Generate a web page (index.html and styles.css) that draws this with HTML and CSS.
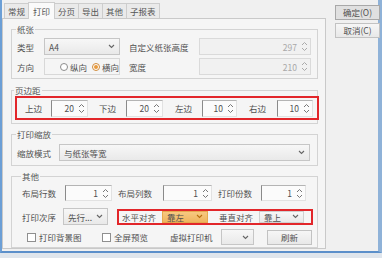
FILE: index.html
```html
<!DOCTYPE html>
<html lang="zh">
<head>
    <meta charset="UTF-8">
    <title>打印设置</title>
    <link rel="stylesheet" href="styles.css">
</head>
<body>
<div class="win">
    <div class="main">
        <div class="tabs">
            <span class="tab">常规</span>
            <span class="tab on">打印</span>
            <span class="tab">分页</span>
            <span class="tab">导出</span>
            <span class="tab">其他</span>
            <span class="tab">子报表</span>
        </div>
        <div class="page">
            <fieldset class="grp g-paper">
                <legend>纸张</legend>
                <div class="row">
                    <span class="lbl w27">类型</span>
                    <div class="sel w76"><span>A4</span><svg width="7" height="5" viewBox="0 0 7 5"><path d="M1 1l2.5 2.5L6 1" fill="none" stroke="#666" stroke-width="1.1"/></svg></div>
                    <span class="lbl ml9 w70">自定义纸张高度</span>
                    <div class="spin dis w112"><span>297</span><svg width="7" height="11" viewBox="0 0 7 11"><path d="M1 4l2.5-2.5L6 4M1 7l2.5 2.5L6 7" fill="none" stroke="#aaa" stroke-width="1"/></svg></div>
                </div>
                <div class="row">
                    <span class="lbl w27">方向</span>
                    <div class="radios w76">
                        <span class="radio"></span><span class="lbl">纵向</span>
                        <span class="radio checked"></span><span class="lbl">横向</span>
                    </div>
                    <span class="lbl ml9 w70">宽度</span>
                    <div class="spin dis w112"><span>210</span><svg width="7" height="11" viewBox="0 0 7 11"><path d="M1 4l2.5-2.5L6 4M1 7l2.5 2.5L6 7" fill="none" stroke="#aaa" stroke-width="1"/></svg></div>
                </div>
            </fieldset>

            <fieldset class="grp g-margin">
                <legend>页边距</legend>
                <div class="mark row margins">
                    <span class="lbl w26">上边</span>
                    <div class="spin w37 mr11"><span>20</span><svg width="7" height="11" viewBox="0 0 7 11"><path d="M1 4l2.5-2.5L6 4M1 7l2.5 2.5L6 7" fill="none" stroke="#777" stroke-width="1"/></svg></div>
                    <span class="lbl w27">下边</span>
                    <div class="spin w37 mr12"><span>20</span><svg width="7" height="11" viewBox="0 0 7 11"><path d="M1 4l2.5-2.5L6 4M1 7l2.5 2.5L6 7" fill="none" stroke="#777" stroke-width="1"/></svg></div>
                    <span class="lbl w27">左边</span>
                    <div class="spin w35 mr12"><span>10</span><svg width="7" height="11" viewBox="0 0 7 11"><path d="M1 4l2.5-2.5L6 4M1 7l2.5 2.5L6 7" fill="none" stroke="#777" stroke-width="1"/></svg></div>
                    <span class="lbl w28">右边</span>
                    <div class="spin w36"><span>10</span><svg width="7" height="11" viewBox="0 0 7 11"><path d="M1 4l2.5-2.5L6 4M1 7l2.5 2.5L6 7" fill="none" stroke="#777" stroke-width="1"/></svg></div>
                </div>
            </fieldset>

            <fieldset class="grp g-scale">
                <legend>打印缩放</legend>
                <div class="row">
                    <span class="lbl w42">缩放模式</span>
                    <div class="sel w251"><span>与纸张等宽</span><svg width="7" height="5" viewBox="0 0 7 5"><path d="M1 1l2.5 2.5L6 1" fill="none" stroke="#666" stroke-width="1.1"/></svg></div>
                </div>
            </fieldset>

            <fieldset class="grp g-other">
                <legend>其他</legend>
                <div class="row r1">
                    <span class="lbl w43">布局行数</span>
                    <div class="spin w47"><span>1</span><svg width="7" height="11" viewBox="0 0 7 11"><path d="M1 4l2.5-2.5L6 4M1 7l2.5 2.5L6 7" fill="none" stroke="#777" stroke-width="1"/></svg></div>
                    <span class="lbl ml6 w45">布局列数</span>
                    <div class="spin w49"><span>1</span><svg width="7" height="11" viewBox="0 0 7 11"><path d="M1 4l2.5-2.5L6 4M1 7l2.5 2.5L6 7" fill="none" stroke="#777" stroke-width="1"/></svg></div>
                    <span class="lbl ml6 w43">打印份数</span>
                    <div class="spin w45"><span>1</span><svg width="7" height="11" viewBox="0 0 7 11"><path d="M1 4l2.5-2.5L6 4M1 7l2.5 2.5L6 7" fill="none" stroke="#777" stroke-width="1"/></svg></div>
                </div>
                <div class="row r2">
                    <span class="lbl w41">打印次序</span>
                    <div class="sel w45"><span>先行...</span><svg width="7" height="5" viewBox="0 0 7 5"><path d="M1 1l2.5 2.5L6 1" fill="none" stroke="#666" stroke-width="1.1"/></svg></div>
                    <div class="mark row align">
                        <span class="lbl w40">水平对齐</span>
                        <div class="sel hot w46"><span>靠左</span><svg width="7" height="5" viewBox="0 0 7 5"><path d="M1 1l2.5 2.5L6 1" fill="none" stroke="#b86e10" stroke-width="1.1"/></svg></div>
                        <span class="lbl ml11 w40">垂直对齐</span>
                        <div class="sel w45"><span>靠上</span><svg width="7" height="5" viewBox="0 0 7 5"><path d="M1 1l2.5 2.5L6 1" fill="none" stroke="#666" stroke-width="1.1"/></svg></div>
                    </div>
                </div>
                <div class="row r3">
                    <span class="check"></span><span class="lbl w58">打印背景图</span>
                    <span class="check"></span><span class="lbl w56">全屏预览</span>
                    <span class="lbl w51">虚拟打印机</span>
                    <div class="sel w33"><span></span><svg width="7" height="5" viewBox="0 0 7 5"><path d="M1 1l2.5 2.5L6 1" fill="none" stroke="#666" stroke-width="1.1"/></svg></div>
                    <button class="btn refresh">刷新</button>
                </div>
            </fieldset>
        </div>
    </div>
    <div class="side">
        <button class="btn ok">确定(O)</button>
        <button class="btn">取消(C)</button>
    </div>
</div>
</body>
</html>
```

FILE: styles.css
```css
html, body {
    margin: 0;
    padding: 0;
}

body {
    width: 382px;
    height: 258px;
    overflow: hidden;
    background: #dfe5ec;
    font-family: "Noto Sans CJK SC", "Noto Sans", sans-serif;
    font-size: 8.5px;
    color: #505050;
}

.win {
    display: flex;
    height: 253px;
    background: #f0f0f0;
    border-left: 2px solid #6c9fd6;
    border-right: 4px solid #8fb2d8;
    border-bottom: 2px solid #5b8fca;
    box-sizing: border-box;
    width: 382px;
}

.main {
    width: 324px;
    display: flex;
    flex-direction: column;
}

/* tab strip */
.tabs {
    display: flex;
    align-items: flex-end;
    height: 18px;
    padding-left: 2px;
}

.tab {
    height: 14px;
    line-height: 14px;
    padding: 0 3px;
    border: 1px solid #cdcdcd;
    border-bottom: none;
    margin-right: -1px;
    background: #eaeaea;
    color: #555;
}

.tab.on {
    height: 16px;
    line-height: 16px;
    background: #fafafa;
    position: relative;
    z-index: 1;
    margin-bottom: -1px;
    padding: 0 4px;
}

.page {
    flex: 1;
    border: 1px solid #c9c9c9;
    background: #f5f5f5;
    padding: 4px 7px 0 8px;
    margin-bottom: 2px;
}

/* group boxes */
.grp {
    margin: 0;
    border: 1px solid #d3d3d3;
    padding: 0;
    min-width: 0;
}

.grp legend {
    padding: 0 1px;
    margin-left: -1px;
    line-height: 12px;
    color: #555;
}

.g-paper {
    padding: 3px 0 3px 5px;
}

.g-paper .row + .row {
    margin-top: 3px;
}

.g-margin {
    margin-top: 5px;
    padding: 0 0 3px 3px;
}

.g-scale {
    margin-top: 4px;
    padding: 4px 0 4px 5px;
}

.g-other {
    margin-top: 4px;
    padding: 3px 0 2px 10px;
}

.row {
    display: flex;
    align-items: center;
}

.r2 {
    margin-top: 7px;
}

.r3 {
    margin-top: 4px;
}

.lbl {
    flex: none;
    white-space: nowrap;
    line-height: 12px;
}

/* red highlight boxes */
.mark {
    border: 2px solid #e2262a;
}

.margins {
    width: 304px;
    height: 24px;
    box-sizing: border-box;
    padding-left: 8px;
}

.align {
    width: 196px;
    height: 16px;
    box-sizing: border-box;
    margin-left: 9px;
    padding-left: 3px;
}

/* inputs */
.sel, .spin {
    flex: none;
    display: flex;
    align-items: center;
    justify-content: space-between;
    box-sizing: border-box;
    height: 17px;
    padding: 0 4px;
}

.sel {
    border: 1px solid #c6c6c6;
    background: linear-gradient(#f7f7f7, #e9e9e9);
}

.align .sel {
    height: 12px;
    border-color: #d0d0d0;
}

.sel.hot {
    background: linear-gradient(#f7c981, #efb55e);
    border-color: #e7a94e;
}

.spin {
    background: #fbfbfb;
    border: 1px solid #e2e2e2;
    border-left-color: #8a8a8a;
    border-top-color: #b4b4b4;
    padding-right: 2px;
}

.spin span {
    flex: 1;
    text-align: right;
    padding-right: 4px;
}

.spin.dis {
    background: #f1f1f1;
    border-color: #dadada;
    color: #a8a8a8;
}

.r1 .spin, .r3 .sel {
    height: 16px;
}

.radios {
    flex: none;
    display: flex;
    align-items: center;
    height: 17px;
    box-sizing: border-box;
    border: 1px solid #d8d8d8;
    padding-left: 15px;
}

.radio {
    flex: none;
    width: 6px;
    height: 6px;
    border: 1px solid #8d8d8d;
    border-radius: 50%;
    background: #fff;
    margin-right: 2px;
    position: relative;
}

.radio.checked {
    margin-left: 5px;
    border-color: #d08a3a;
}

.radio.checked::after {
    content: "";
    position: absolute;
    left: 1px;
    top: 1px;
    width: 4px;
    height: 4px;
    border-radius: 50%;
    background: #e89a3c;
}

.check {
    flex: none;
    width: 7px;
    height: 7px;
    border: 1px solid #8f8f8f;
    background: #fff;
    margin: 0 3px 0 5px;
}

.btn {
    font: inherit;
    color: #505050;
    background: linear-gradient(#f6f6f6, #e8e8e8);
    border: 1px solid #c2c2c2;
    height: 15px;
    padding: 0;
    line-height: 13px;
}

.refresh {
    width: 45px;
    margin-left: 13px;
}

.side {
    display: flex;
    flex-direction: column;
    gap: 3px;
    padding: 5px 0 0 9px;
}

.side .btn {
    width: 45px;
    height: 15px;
}

.side .ok {
    background: #e0e0e0;
    border-color: #a8a8a8;
}

/* widths */
.w26 { width: 26px; }
.w27 { width: 27px; }
.w28 { width: 28px; }
.w33 { width: 33px; }
.w35 { width: 35px; }
.w36 { width: 36px; }
.w37 { width: 37px; }
.w40 { width: 40px; }
.w41 { width: 41px; }
.w42 { width: 42px; }
.w43 { width: 43px; }
.w45 { width: 45px; }
.w46 { width: 46px; }
.w47 { width: 47px; }
.w49 { width: 49px; }
.w51 { width: 51px; }
.w56 { width: 56px; }
.w58 { width: 58px; }
.w70 { width: 70px; }
.w76 { width: 76px; }
.w112 { width: 112px; }
.w251 { width: 251px; }

.ml6 { margin-left: 6px; }
.ml9 { margin-left: 9px; }
.ml11 { margin-left: 11px; }
.mr11 { margin-right: 11px; }
.mr12 { margin-right: 12px; }
```
